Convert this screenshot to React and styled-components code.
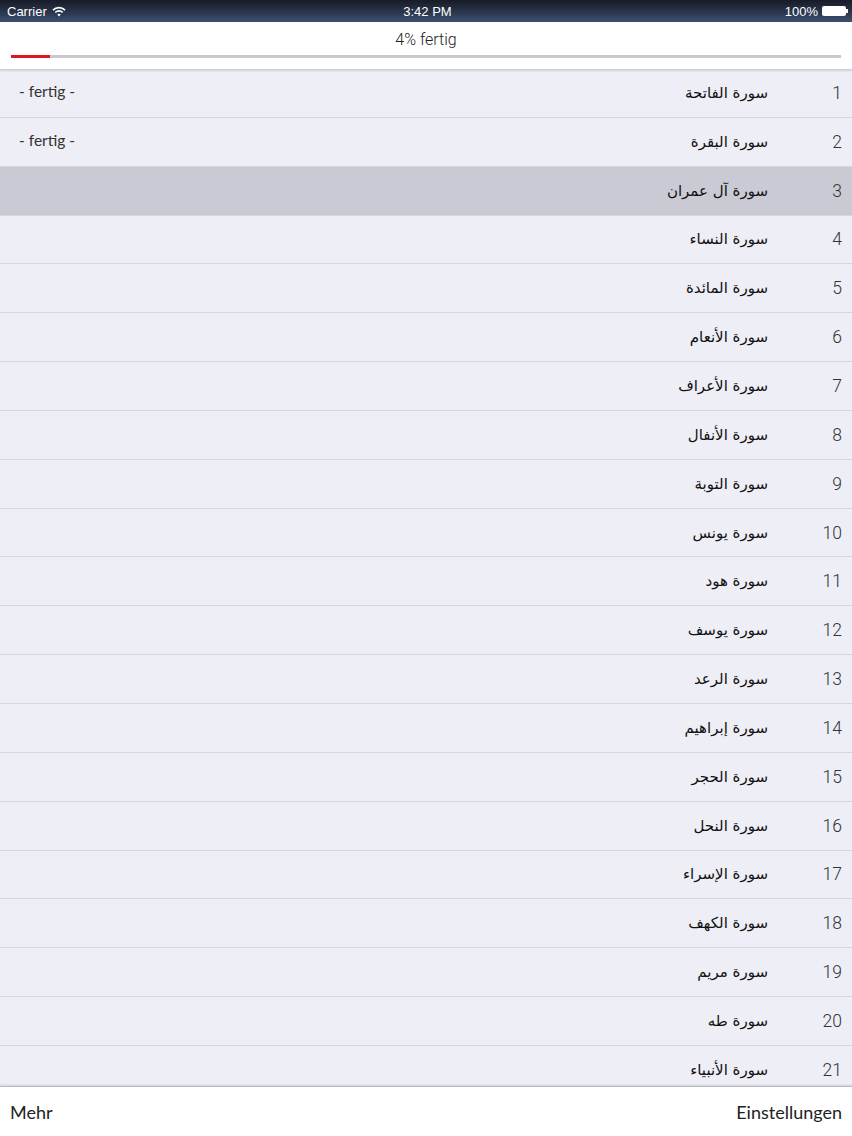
import React from "react";
import styled, { createGlobalStyle } from "styled-components";

const GlobalStyle = createGlobalStyle`
  html, body {
    margin: 0;
    padding: 0;
    background: #fff;
  }
  * { box-sizing: border-box; }
`;

const suras = [
  "سورة الفاتحة",
  "سورة البقرة",
  "سورة آل عمران",
  "سورة النساء",
  "سورة المائدة",
  "سورة الأنعام",
  "سورة الأعراف",
  "سورة الأنفال",
  "سورة التوبة",
  "سورة يونس",
  "سورة هود",
  "سورة يوسف",
  "سورة الرعد",
  "سورة إبراهيم",
  "سورة الحجر",
  "سورة النحل",
  "سورة الإسراء",
  "سورة الكهف",
  "سورة مريم",
  "سورة طه",
  "سورة الأنبياء",
];

const done = [1, 2];
const selected = 3;

// Screen wrapper
const Screen = styled.div`
  width: 852px;
  height: 1136px;
  display: flex;
  flex-direction: column;
  overflow: hidden;
  font-family: "Liberation Sans", Arial, sans-serif;
`;

// Status bar
const StatusBar = styled.div`
  height: 22px;
  flex: none;
  display: grid;
  grid-template-columns: 1fr auto 1fr;
  align-items: center;
  padding: 0 4px 0 7px;
  background: linear-gradient(#171b26, #2c3850 60%, #3e5070);
  color: #fff;
  font-size: 13px;
`;

const StatusLeft = styled.div`
  display: flex;
  align-items: center;
  gap: 5px;
`;

const StatusRight = styled.div`
  display: flex;
  align-items: center;
  justify-content: flex-end;
  gap: 4px;
`;

const Battery = styled.div`
  display: flex;
  align-items: center;

  &::before {
    content: "";
    width: 24px;
    height: 10px;
    border-radius: 2px;
    background: #fff;
  }
  &::after {
    content: "";
    width: 2px;
    height: 4px;
    background: #fff;
  }
`;

// Progress header
const Header = styled.div`
  height: 48px;
  flex: none;
  background: #fff;
  display: flex;
  flex-direction: column;
  align-items: center;
  padding: 9px 11px 0;
  border-bottom: 1px solid #cfd0d6;
  box-shadow: 0 1px 2px rgba(0, 0, 0, 0.12);
  position: relative;
  z-index: 1;
`;

const HeaderTitle = styled.div`
  font-family: Roboto, "Liberation Sans", sans-serif;
  font-weight: 300;
  font-size: 16px;
  color: #222;
  line-height: 18px;
`;

const Track = styled.div`
  margin-top: 6px;
  width: 100%;
  height: 3px;
  background: #c9c9cc;
`;

const Fill = styled.div`
  height: 100%;
  background: #e0161a;
`;

// List
const List = styled.div`
  flex: 1;
  overflow: hidden;
  background: #edeef6;
  margin-top: -1px;
`;

const Row = styled.div`
  height: 48.85px;
  display: flex;
  align-items: center;
  border-bottom: 1px solid #d6d7de;
  background: ${(p) => (p.active ? "#c9cad3" : "#edeef6")};
  padding: 0 10px 0 19px;
`;

const Status = styled.div`
  flex: 1;
  font-family: Lato, "Liberation Sans", sans-serif;
  font-size: 15.5px;
  color: #333;
  margin-top: -4px;
`;

const SuraName = styled.div`
  font-family: "DejaVu Sans", sans-serif;
  font-size: 15px;
  color: #111;
  direction: rtl;
`;

const Num = styled.div`
  width: 74px;
  text-align: right;
  font-family: Roboto, "Liberation Sans", sans-serif;
  font-weight: 300;
  font-size: 17.5px;
  color: #333;
`;

// Bottom toolbar
const Toolbar = styled.div`
  height: 50px;
  flex: none;
  background: #fff;
  display: flex;
  justify-content: space-between;
  align-items: center;
  padding: 0 10px;
  border-top: 1px solid #b9bac0;
  box-shadow: 0 -1px 2px rgba(0, 0, 0, 0.12);
  position: relative;
`;

const ToolButton = styled.span`
  font-family: Lato, "Liberation Sans", sans-serif;
  font-size: 18px;
  color: #222;
`;

const Wifi = () => (
  <svg width="14" height="11" viewBox="0 0 14 11">
    <path d="M1 4.2a8.5 8.5 0 0 1 12 0" stroke="#fff" strokeWidth="1.7" fill="none" />
    <path d="M3.3 6.5a5.2 5.2 0 0 1 7.4 0" stroke="#fff" strokeWidth="1.7" fill="none" />
    <path d="M7 10.5 5.3 8.6a2.4 2.4 0 0 1 3.4 0z" fill="#fff" />
  </svg>
);

const App = () => {
  return (
    <Screen>
      <GlobalStyle />
      <StatusBar>
        <StatusLeft>
          Carrier <Wifi />
        </StatusLeft>
        <div>3:42 PM</div>
        <StatusRight>
          100% <Battery />
        </StatusRight>
      </StatusBar>
      <Header>
        <HeaderTitle>4% fertig</HeaderTitle>
        <Track>
          <Fill style={{ width: "4.7%" }} />
        </Track>
      </Header>
      <List>
        {suras.map((name, i) => (
          <Row key={i} active={i + 1 === selected}>
            <Status>{done.includes(i + 1) ? "- fertig -" : ""}</Status>
            <SuraName>{name}</SuraName>
            <Num>{i + 1}</Num>
          </Row>
        ))}
      </List>
      <Toolbar>
        <ToolButton>Mehr</ToolButton>
        <ToolButton>Einstellungen</ToolButton>
      </Toolbar>
    </Screen>
  );
};

export default App;
